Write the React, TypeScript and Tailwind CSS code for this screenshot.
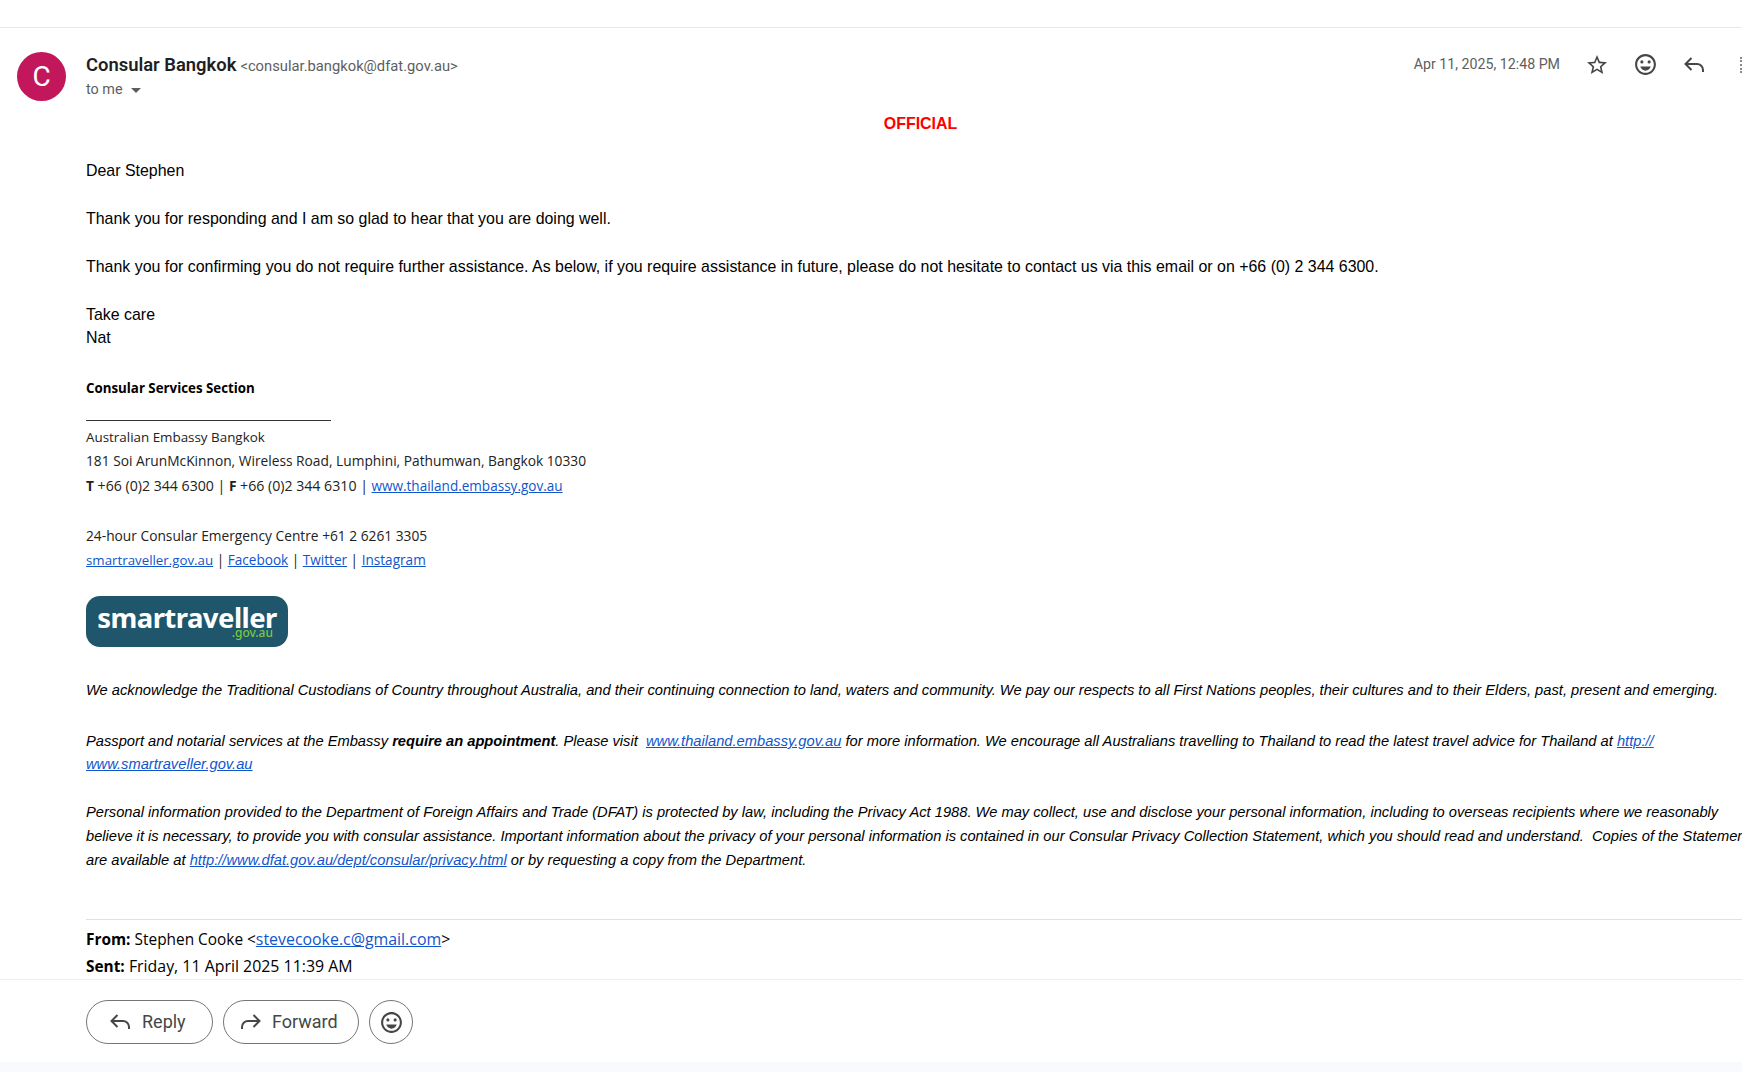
import { MdStarBorder, MdOutlineEmojiEmotions } from "react-icons/md";

const ARIAL = "font-['Liberation_Sans',Arial,sans-serif]";
const SIG = "font-['Open_Sans','Noto_Sans',sans-serif]";

function Link({ children }: { children: React.ReactNode }) {
  return <a className="text-[#1155cc] underline">{children}</a>;
}

function ReplyIcon({ flip }: { flip?: boolean }) {
  return (
    <svg
      width="24"
      height="24"
      viewBox="0 0 24 24"
      fill="none"
      stroke="currentColor"
      strokeWidth="2"
      className={flip ? "-scale-x-100" : ""}
    >
      <path d="M9.5 5 3.5 11l6 6" />
      <path d="M3.5 11H15a6 6 0 0 1 6 6v2" />
    </svg>
  );
}

export default function App() {
  return (
    <div className="w-[1742px] h-[1072px] overflow-hidden flex flex-col bg-white text-[#111]">
      <div className="h-[28px] shrink-0 border-b border-[#e8e8e8]" />

      <div className="flex-1 min-h-0 overflow-hidden flex flex-col pt-[24px]">
        <div className="flex pl-[17px] h-[60px] shrink-0 font-['Roboto',sans-serif]">
          <div className="w-[49px] h-[49px] rounded-full bg-[#c2185b] text-white flex items-center justify-center text-[28px]">
            C
          </div>
          <div className="ml-[20px] flex-1">
            <div className="flex items-baseline gap-[4px] h-[26px] leading-[26px]">
              <span className="text-[18.4px] font-semibold text-[#1f1f1f]">Consular Bangkok</span>
              <span className="text-[14.75px] text-[#5e5e5e]">&lt;consular.bangkok@dfat.gov.au&gt;</span>
            </div>
            <div className="flex items-center gap-[8px] text-[14.4px] text-[#5e5e5e] h-[24px]">
              to me
              <span className="w-0 h-0 border-x-[5px] border-x-transparent border-t-[5px] border-t-[#5e5e5e]" />
            </div>
          </div>
          <div className="flex items-center h-[25px] text-[#444746]">
            <span className="text-[14.2px] text-[#5e5e5e] mr-[13px] mt-[1px]">Apr 11, 2025, 12:48 PM</span>
            <span className="w-[48px] flex justify-center"><MdStarBorder size={24} /></span>
            <span className="w-[48px] flex justify-center"><MdOutlineEmojiEmotions size={25} /></span>
            <span className="w-[50px] flex justify-center"><ReplyIcon /></span>
            <span className="w-[2px] h-[16px] ml-[21px] border-l-2 border-dotted border-[#888]" />
          </div>
        </div>

        <div className="pl-[86px] whitespace-nowrap">
          <div className={`${ARIAL} text-[15.93px] text-black`}>
            <div className="w-[1669px] text-center font-bold text-[#ff0000] h-[24px] leading-[24px]">OFFICIAL</div>
            <div className="h-[24px] leading-[24px] mt-[23px]">Dear Stephen</div>
            <div className="h-[24px] leading-[24px] mt-[24px]">Thank you for responding and I am so glad to hear that you are doing well.</div>
            <div className="h-[24px] leading-[24px] mt-[24px]">
              Thank you for confirming you do not require further assistance. As below, if you require assistance in future, please do not hesitate to contact us via this email or on +66 (0) 2 344 6300.
            </div>
            <div className="h-[24px] leading-[24px] mt-[24px]">Take care</div>
            <div className="h-[22px] leading-[22px]">Nat</div>
          </div>

          <div className={`${SIG} text-[13.75px] text-[#222]`}>
            <div className="font-bold text-[13.3px] h-[24px] leading-[24px] mt-[27px] text-black">Consular Services Section</div>
            <div className="w-[245px] border-t border-[#333] mt-[20px]" />
            <div className="h-[24px] leading-[24px] mt-[4px] text-[13.4px]">Australian Embassy Bangkok</div>
            <div className="h-[24px] leading-[24px]">181 Soi ArunMcKinnon, Wireless Road, Lumphini, Pathumwan, Bangkok 10330</div>
            <div className="h-[25px] leading-[25px]">
              <b>T</b> <span className="text-[14.15px]">+66 (0)2 344 6300 |</span> <b>F</b> <span className="text-[14.15px]">+66 (0)2 344 6310 |</span>{" "}
              <span className="text-[13.55px]"><Link>www.thailand.embassy.gov.au</Link></span>
            </div>
            <div className="h-[25px] leading-[25px] mt-[25px]">24-hour Consular Emergency Centre +61 2 6261 3305</div>
            <div className="h-[24px] leading-[24px] text-[13.6px]">
              <span className="text-[13.3px]"><Link>smartraveller.gov.au</Link></span> | <Link>Facebook</Link> | <Link>Twitter</Link> | <Link>Instagram</Link>
            </div>
          </div>

          <div className="w-[202px] h-[51px] mt-[24px] rounded-[14px] bg-[#1f566b] relative flex flex-col items-center font-['Noto_Sans',sans-serif]">
            <span className="text-white font-bold text-[27.5px] tracking-[-0.55px] leading-[19px] mt-[12px]">smartraveller</span>
            <span className="absolute right-[15px] bottom-[8px] text-[#7ac943] font-medium text-[12px] leading-[12px]">.gov.au</span>
          </div>

          <div className={`${ARIAL} italic text-[14.7px] text-black`}>
            <div className="h-[24px] leading-[24px] mt-[31px]">
              We acknowledge the Traditional Custodians of Country throughout Australia, and their continuing connection to land, waters and community. We pay our respects to all First Nations peoples, their cultures and to their Elders, past, present and emerging.
            </div>
            <div className="h-[24px] leading-[24px] mt-[27px]">
              Passport and notarial services at the Embassy <b>require an appointment</b>. Please visit&nbsp; <Link>www.thailand.embassy.gov.au</Link> for more information. We encourage all Australians travelling to Thailand to read the latest travel advice for Thailand at <Link>http://</Link>
            </div>
            <div className="h-[23px] leading-[23px]"><Link>www.smartraveller.gov.au</Link></div>
            <div className="h-[24px] leading-[24px] mt-[24px]">
              Personal information provided to the Department of Foreign Affairs and Trade (DFAT) is protected by law, including the Privacy Act 1988. We may collect, use and disclose your personal information, including to overseas recipients where we reasonably
            </div>
            <div className="h-[24px] leading-[24px]">
              believe it is necessary, to provide you with consular assistance. Important information about the privacy of your personal information is contained in our Consular Privacy Collection Statement, which you should read and understand.&nbsp; Copies of the Statement
            </div>
            <div className="h-[24px] leading-[24px]">
              are available at <Link>http://www.dfat.gov.au/dept/consular/privacy.html</Link> or by requesting a copy from the Department.
            </div>
          </div>

          <div className="border-t border-[#e1e1e1] mt-[47px]" />
          <div className={`${SIG} text-[15.9px] text-black`}>
            <div className="h-[27px] leading-[27px] mt-[6px]">
              <b className="text-[15.4px]">From:</b> <span className="text-[15.4px]">Stephen Cooke &lt;</span><Link>stevecooke.c@gmail.com</Link>&gt;
            </div>
            <div className="h-[27px] leading-[27px]">
              <b className="text-[15.4px]">Sent:</b> Friday, 11 April 2025 11:39 AM
            </div>
          </div>
        </div>
      </div>

      <div className="h-[83px] shrink-0 border-t border-[#eeeeee] pl-[86px] pt-[20px] flex gap-[10px] font-['Roboto',sans-serif] text-[18px] text-[#444746]">
        <button className="w-[127px] h-[44px] rounded-full border border-[#747775] flex items-center pl-[21px] gap-[10px]">
          <ReplyIcon />
          <span className="mb-[2px]">Reply</span>
        </button>
        <button className="w-[136px] h-[44px] rounded-full border border-[#747775] flex items-center pl-[15px] gap-[9px]">
          <ReplyIcon flip />
          <span className="mb-[2px]">Forward</span>
        </button>
        <button className="w-[44px] h-[44px] rounded-full border border-[#747775] flex items-center justify-center">
          <MdOutlineEmojiEmotions size={25} />
        </button>
      </div>
      <div className="h-[10px] shrink-0 bg-[#f8fafd]" />
    </div>
  );
}
